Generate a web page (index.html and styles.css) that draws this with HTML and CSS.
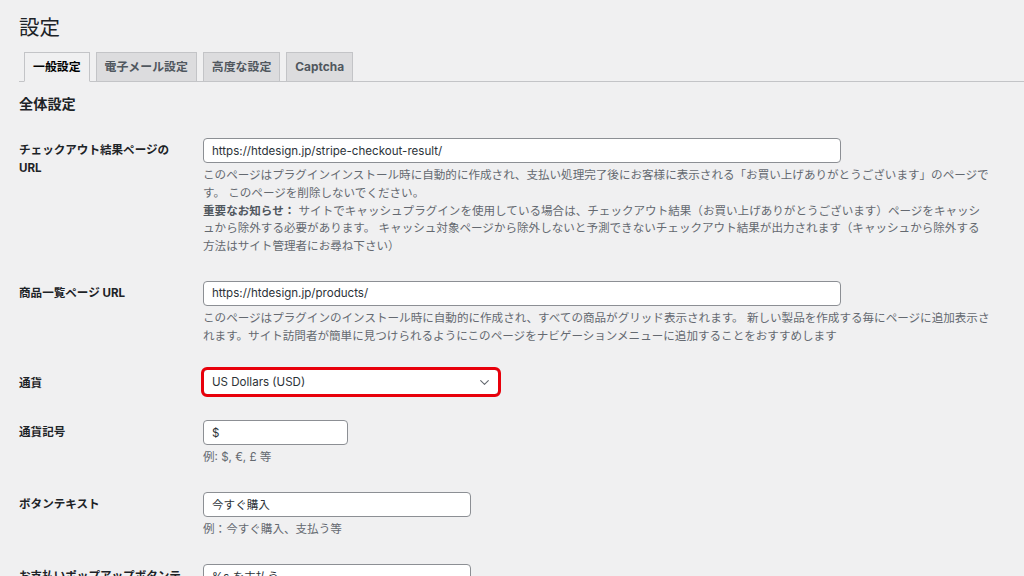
FILE: index.html
```html
<!DOCTYPE html>
<html lang="ja">
<head>
<meta charset="utf-8">
<title>設定</title>
<link rel="stylesheet" href="styles.css">
</head>
<body>
<div class="wrap">
  <h1 class="title">設定</h1>
  <nav class="tabs">
    <a class="tab active">一般設定</a>
    <a class="tab">電子メール設定</a>
    <a class="tab">高度な設定</a>
    <a class="tab">Captcha</a>
  </nav>
  <h2 class="section">全体設定</h2>
  <div class="form">
    <div class="row">
      <div class="label">チェックアウト結果ページのURL</div>
      <div class="field">
        <input class="text wide" type="text" value="https://htdesign.jp/stripe-checkout-result/">
        <p class="desc">このページはプラグインインストール時に自動的に作成され、支払い処理完了後にお客様に表示される「お買い上げありがとうございます」のページで<br>す。 このページを削除しないでください。<br><strong>重要なお知らせ：</strong> サイトでキャッシュプラグインを使用している場合は、チェックアウト結果（お買い上げありがとうございます）ページをキャッシ<br>ュから除外する必要があります。 キャッシュ対象ページから除外しないと予測できないチェックアウト結果が出力されます（キャッシュから除外する<br>方法はサイト管理者にお尋ね下さい）</p>
      </div>
    </div>
    <div class="row">
      <div class="label">商品一覧ページ URL</div>
      <div class="field">
        <input class="text wide" type="text" value="https://htdesign.jp/products/">
        <p class="desc">このページはプラグインのインストール時に自動的に作成され、すべての商品がグリッド表示されます。 新しい製品を作成する毎にページに追加表示さ<br>れます。サイト訪問者が簡単に見つけられるようにこのページをナビゲーションメニューに追加することをおすすめします</p>
      </div>
    </div>
    <div class="row">
      <div class="label label-select">通貨</div>
      <div class="field field-select">
        <div class="select-wrap">
          <select class="select">
            <option>US Dollars (USD)</option>
          </select>
          <svg class="chevron" width="9" height="5" viewBox="0 0 9 5"><path d="M0.7 0.7 L4.5 4.3 L8.3 0.7" fill="none" stroke="#646970" stroke-width="1.1" stroke-linecap="round" stroke-linejoin="round"/></svg>
        </div>
      </div>
    </div>
    <div class="row">
      <div class="label">通貨記号</div>
      <div class="field">
        <input class="text small" type="text" value="$">
        <p class="desc">例: $, €, £ 等</p>
      </div>
    </div>
    <div class="row">
      <div class="label">ボタンテキスト</div>
      <div class="field">
        <input class="text medium" type="text" value="今すぐ購入">
        <p class="desc">例：今すぐ購入、支払う等</p>
      </div>
    </div>
    <div class="row">
      <div class="label">お支払いポップアップボタンテキスト</div>
      <div class="field">
        <input class="text medium" type="text" value="%s を支払う">
        <p class="desc">例：%s を支払う</p>
      </div>
    </div>
  </div>
</div>
</body>
</html>
```

FILE: styles.css
```css
html, body {
  margin: 0;
  padding: 0;
  background: #f0f0f1;
}
body {
  font-family: "Inter", "Noto Sans CJK JP", sans-serif;
  font-size: 11.57px;
  color: #1d2327;
  overflow: hidden;
}
.wrap {
  padding: 15px 0 0 19px;
}
.title {
  margin: 0;
  font-size: 20.5px;
  line-height: 26px;
  font-weight: 400;
  color: #1d2327;
}
.tabs {
  display: flex;
  gap: 6px;
  margin-top: 11px;
  padding-left: 5px;
  border-bottom: 1px solid #c3c4c7;
}
.tab {
  display: block;
  margin-bottom: -1px;
  padding: 4px 8px;
  line-height: 20px;
  font-size: 11.9px;
  font-weight: 700;
  color: #50575e;
  background: #dcdcde;
  border: 1px solid #c3c4c7;
  text-decoration: none;
}
.tab.active {
  background: #f0f0f1;
  color: #000;
  border-bottom-color: #f0f0f1;
}
.section {
  margin: 11.5px 0 0;
  font-size: 14.2px;
  line-height: 20px;
  font-weight: 700;
  color: #1d2327;
}
.form {
  margin-top: 12px;
}
.row {
  display: grid;
  grid-template-columns: 184px 1fr;
}
.label {
  padding: 16.5px 17px 12.5px 0;
  font-weight: 700;
  line-height: 17.5px;
  color: #1d2327;
}
.label-select {
  padding-top: 16.5px;
}
.field {
  padding: 12.5px 0;
}
.field-select {
  padding-top: 11px;
}
.text {
  display: block;
  box-sizing: border-box;
  height: 25px;
  margin: 0;
  padding: 0 8px;
  font-family: inherit;
  font-size: 11.57px;
  color: #2c3338;
  background: #fff;
  border: 1px solid #8c8f94;
  border-radius: 4px;
  outline: none;
}
.wide { width: 638px; }
.small { width: 145px; }
.medium { width: 268px; }
.desc {
  margin: 4px 0 0;
  line-height: 17.8px;
  color: #646970;
}
.desc strong {
  color: #50575e;
}
.select-wrap {
  position: relative;
  width: 296px;
}
.select {
  display: block;
  box-sizing: border-box;
  width: 296px;
  height: 26px;
  margin: 0;
  padding: 0 24px 0 8px;
  font-family: inherit;
  font-size: 11.57px;
  color: #2c3338;
  background: #fff;
  border: 1px solid #8c8f94;
  border-radius: 4px;
  -webkit-appearance: none;
  appearance: none;
  outline: 3px solid #e8000b;
  outline-offset: -1px;
}
.chevron {
  position: absolute;
  right: 10px;
  top: 11px;
}
```
